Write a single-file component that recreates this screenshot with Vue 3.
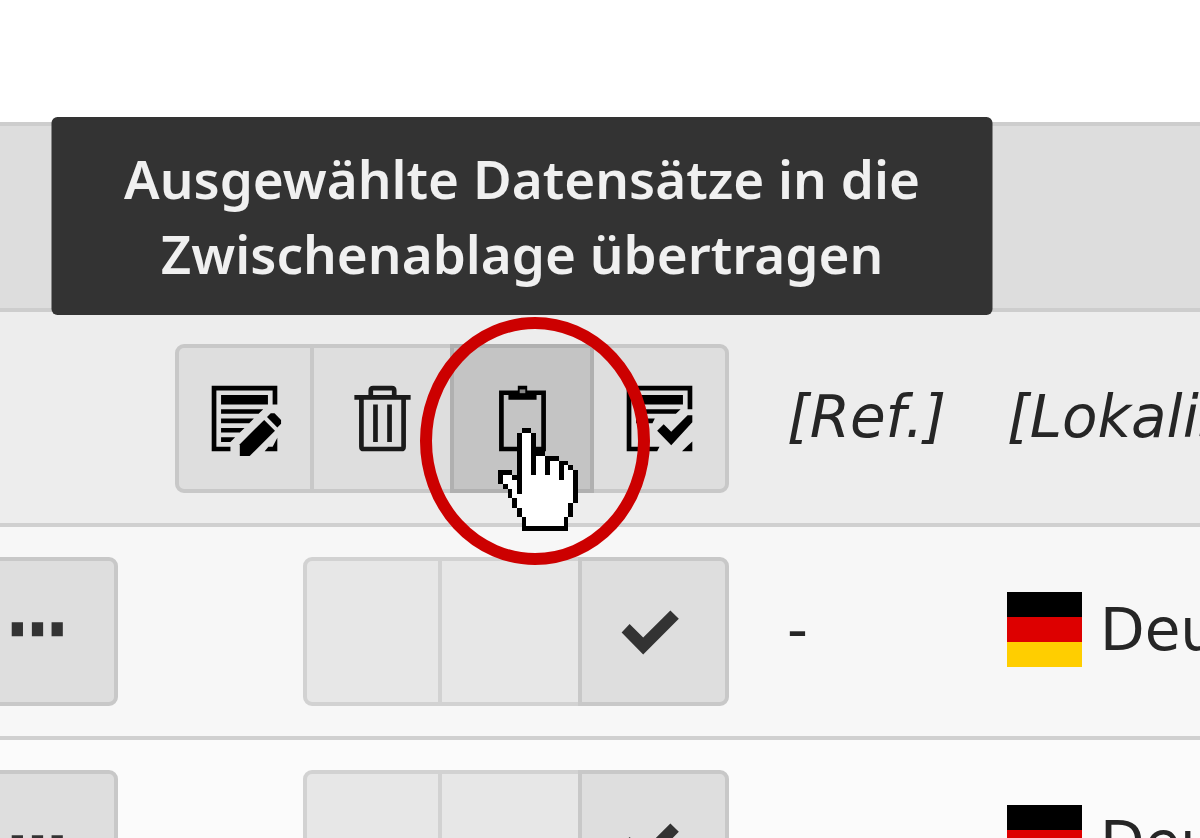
<script setup>
import { ref } from "vue";

// Records shown in the list
const records = ref([
  { id: 1, reference: "-", language: "Deutsch", selected: true },
  { id: 2, reference: "-", language: "Deutsch", selected: true },
]);

// Hand pointer, B = outline, W = fill
const handRows = [
  ".....BB..........",
  "....BWWB.........",
  "....BWWB.........",
  "....BWWB.........",
  "....BWWB.........",
  "....BWWBBB.......",
  "....BWWBWWBBB....",
  "....BWWBWWBWWBB..",
  "....BWWBWWBWWBWB.",
  "BBB.BWWBWWBWWBWWB",
  "BWWBBWWWWWWWWBWWB",
  "BWWWBWWWWWWWWWWWB",
  ".BWWBWWWWWWWWWWWB",
  "..BWBWWWWWWWWWWWB",
  "..BWWWWWWWWWWWWWB",
  "...BWWWWWWWWWWWWB",
  "...BWWWWWWWWWWWB.",
  "....BWWWWWWWWWWB.",
  "....BWWWWWWWWWWB.",
  ".....BWWWWWWWWB..",
  ".....BWWWWWWWWB..",
  ".....BBBBBBBBBB..",
];

const toPath = (letter) =>
  handRows
    .flatMap((row, y) =>
      [...row].map((cell, x) => (cell === letter ? `M${x} ${y}h1v1h-1z` : ""))
    )
    .join("");

const handOutline = toPath("B");
const handFill = toPath("W");
</script>

<template>
  <main class="record-list">
    <div class="list-heading"></div>

    <table class="list-table">
      <colgroup>
        <col class="col-more" />
        <col class="col-control" />
        <col class="col-ref" />
        <col />
      </colgroup>
      <thead>
        <tr>
          <td></td>
          <td>
            <div class="btn-group">
              <button type="button" class="btn btn-outer" aria-label="Bearbeiten">
                <svg class="icon" viewBox="0 0 16 16">
                  <path d="M1 1h14v4h-1V2H2v12h3v1H1z" />
                  <path d="M3 3h10v2H3zM3 6h9l-1 1H3zM3 8h7l-1 1H3zM3 10h5l-1 1H3zM3 12h3l-1 1H3z" />
                  <path d="M7 16v-2.5l5.2-5.2 2.3 2.3L9.1 16z" />
                  <path d="M12.8 7.7l.8-.8h.8l1.4 1.4v.8l-.8.8z" />
                  <path d="M12.3 15l.8-1h.9l1-1.9V15z" />
                </svg>
              </button>
              <button type="button" class="btn" aria-label="Löschen">
                <svg class="icon icon-soft" viewBox="0 0 16 16">
                  <path d="M5 3V2q0-1 1-1h4q1 0 1 1v1h3v1h-1v10q0 1-1 1H4q-1 0-1-1V4H2V3zm1 0h4V2H6zM4 4v10h8V4z" fill-rule="evenodd" />
                  <path d="M6 5h1v8H6zM9 5h1v8H9z" />
                </svg>
              </button>
              <div class="btn-anchor">
                <button type="button" class="btn btn-active" aria-describedby="clipboard-tip" aria-label="Zwischenablage">
                  <svg class="icon" viewBox="0 0 16 16">
                    <path d="M3 2h4V1h2v1h4v13H3zM4 3v11h8V3h-1v1H5V3z" fill-rule="evenodd" />
                    <path class="clip-hole" d="M7.4 1.8h1.2v.8H7.4z" />
                  </svg>
                </button>
                <div id="clipboard-tip" class="tooltip" role="tooltip">
                  Ausgewählte Datensätze in die Zwischenablage übertragen
                </div>
                <svg class="pointer" viewBox="0 0 17 22" shape-rendering="crispEdges">
                  <path :d="handFill" fill="#fff" />
                  <path :d="handOutline" fill="#000" />
                </svg>
                <svg class="marker" viewBox="0 0 230 250">
                  <ellipse cx="115" cy="125" rx="109" ry="118" />
                </svg>
              </div>
              <button type="button" class="btn btn-outer" aria-label="Auswahl umkehren">
                <svg class="icon" viewBox="0 0 16 16">
                  <path d="M1 1h14v5h-1V2H2v12h6l-.5 1H1z" />
                  <path d="M3 3h10v2H3zM3 6h9.5l-1 1H3zM3 8h4l-.5 1H3z" />
                  <path d="M7.5 10.6l1.4-1.4 1.6 1.6L14 7.3h1v1.5l-4.5 4.9z" />
                  <path d="M12.8 15l1.2-1.2 1-.9V15z" />
                </svg>
              </button>
            </div>
          </td>
          <th scope="col">[Ref.]</th>
          <th scope="col">[Lokalisierung]</th>
        </tr>
      </thead>
      <tbody>
        <tr v-for="record in records" :key="record.id">
          <td>
            <div class="btn-group">
              <button type="button" class="btn btn-more" aria-label="Mehr">
                <svg class="icon" viewBox="0 0 16 16">
                  <path class="glyph" d="M2.5 6h2.4v3H2.5zM6.8 6h2.4v3H6.8zM11 6h2.4v3H11z" />
                </svg>
              </button>
            </div>
          </td>
          <td>
            <div class="btn-group">
              <button type="button" class="btn btn-outer btn-disabled" disabled aria-label="Leer"></button>
              <button type="button" class="btn btn-disabled" disabled aria-label="Leer"></button>
              <button type="button" class="btn btn-check" :aria-pressed="record.selected" aria-label="Auswählen">
                <svg class="icon" viewBox="0 0 16 16">
                  <path class="glyph" d="M1.2 8.2L2.9 6.4l2.9 2.9 5.8-5.8 1.8 1.8-7.6 7.6z" />
                </svg>
              </button>
            </div>
          </td>
          <td>{{ record.reference }}</td>
          <td>
            <div class="language">
              <svg class="flag" viewBox="0 0 3 3" preserveAspectRatio="none">
                <path d="M0 0h3v1H0z" fill="#000" />
                <path d="M0 1h3v1H0z" fill="#d00" />
                <path d="M0 2h3v1H0z" fill="#ffce00" />
              </svg>
              <span>{{ record.language }}</span>
            </div>
          </td>
        </tr>
      </tbody>
    </table>
  </main>
</template>

<style>
body {
  margin: 0;
  background: #fff;
}
</style>

<style scoped>
.record-list {
  box-sizing: border-box;
  height: 100vh;
  padding-top: 122px;
  overflow: hidden;
  color: #262626;
  font-family: "DejaVu Sans", Verdana, sans-serif;
  font-size: 58px;
  line-height: 72px;
}

.list-heading {
  height: 182px;
  background: #ddd;
  border-top: 4px solid #cdcdcd;
  border-bottom: 4px solid #cdcdcd;
}

.list-table {
  width: 100%;
  table-layout: fixed;
  border-spacing: 0;
}

.col-more {
  width: 118px;
}

.col-control {
  width: 611px;
}

.col-ref {
  width: 220px;
}

th,
td {
  padding: 30px 0;
  border-bottom: 4px solid #d0d0d0;
  text-align: left;
  vertical-align: middle;
  white-space: nowrap;
}

th {
  font-weight: normal;
  font-style: italic;
}

thead tr {
  background: #ededed;
}

thead td,
thead th {
  padding-top: 32px;
}

tbody tr:nth-child(odd) {
  background: #f7f7f7;
}

tbody tr:nth-child(even) {
  background: #fbfbfb;
}

th:nth-child(3),
td:nth-child(3),
th:nth-child(4),
td:nth-child(4) {
  padding-bottom: 34px;
  padding-left: 58px;
}

.btn-group {
  display: flex;
  justify-content: flex-end;
}

.btn {
  display: flex;
  flex: none;
  align-items: center;
  justify-content: center;
  box-sizing: border-box;
  width: 144px;
  height: 149px;
  margin: 0;
  padding: 0;
  background: #dedede;
  border: 4px solid #c8c8c8;
  cursor: pointer;
}

.btn-group > * + * {
  margin-left: -4px;
}

.btn-group > .btn:first-child {
  border-top-left-radius: 9px;
  border-bottom-left-radius: 9px;
}

.btn-group > .btn:last-child {
  border-top-right-radius: 9px;
  border-bottom-right-radius: 9px;
}

.btn-outer {
  width: 139px;
}

.btn-check {
  width: 151px;
}

.btn-more {
  width: 161px;
}

.btn-disabled {
  background: #e7e7e7;
  border-color: #d2d2d2;
}

.btn-anchor {
  position: relative;
  z-index: 1;
}

.btn-active {
  background: #c4c4c4;
  border-color: #b0b0b0;
}

.icon {
  width: 75px;
  height: 75px;
  fill: #000;
}

.icon-soft {
  fill: #1a1a1a;
}

.glyph {
  fill: #333;
}

.clip-hole {
  fill: #888;
}

.tooltip {
  position: absolute;
  bottom: 178px;
  left: 50%;
  box-sizing: border-box;
  width: 941px;
  padding: 24px 56px;
  transform: translateX(-50%);
  background: #333;
  border-radius: 6px;
  color: #f0f0f0;
  font-family: "Noto Sans", "Open Sans", sans-serif;
  font-size: 53px;
  font-weight: 600;
  line-height: 75px;
  text-align: center;
  white-space: normal;
}

.pointer {
  position: absolute;
  top: 84px;
  left: 48px;
  width: 80px;
  height: 103px;
}

.marker {
  position: absolute;
  top: -28px;
  left: -30px;
  width: 230px;
  height: 250px;
  fill: none;
  stroke: #c00;
  stroke-width: 12px;
  pointer-events: none;
}

.language {
  display: flex;
  align-items: center;
  gap: 18px;
}

.flag {
  flex: none;
  width: 75px;
  height: 75px;
}
</style>
